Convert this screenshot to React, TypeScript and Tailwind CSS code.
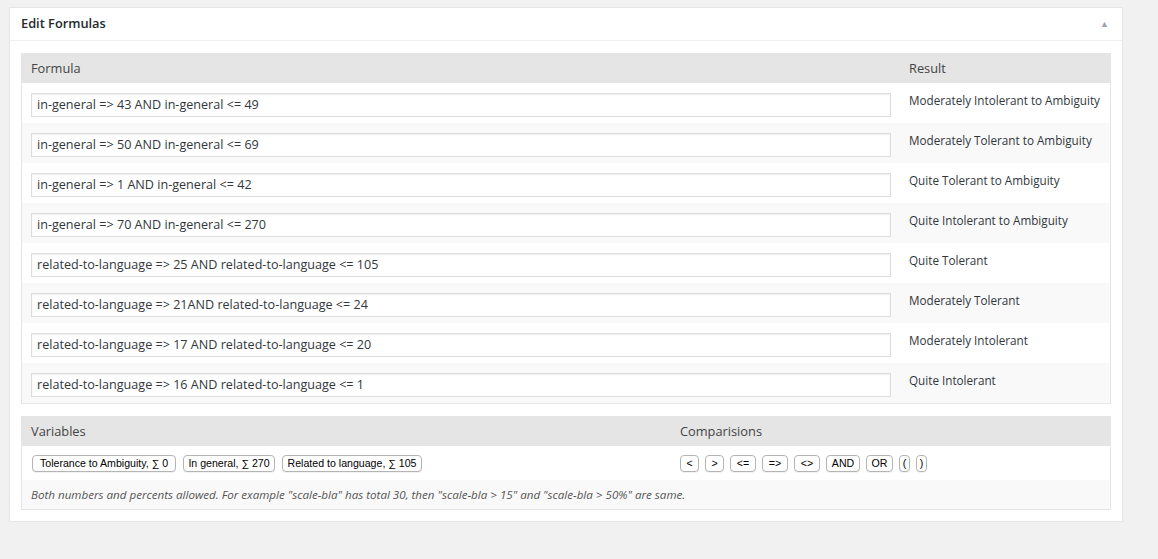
import React from "react";

const rows: [string, string][] = [
  ["in-general => 43 AND in-general <= 49", "Moderately Intolerant to Ambiguity"],
  ["in-general => 50 AND in-general <= 69", "Moderately Tolerant to Ambiguity"],
  ["in-general => 1 AND in-general <= 42", "Quite Tolerant to Ambiguity"],
  ["in-general => 70 AND in-general <= 270", "Quite Intolerant to Ambiguity"],
  ["related-to-language => 25 AND related-to-language <= 105", "Quite Tolerant"],
  ["related-to-language => 21AND related-to-language <= 24", "Moderately Tolerant"],
  ["related-to-language => 17 AND related-to-language <= 20", "Moderately Intolerant"],
  ["related-to-language => 16 AND related-to-language <= 1", "Quite Intolerant"],
];

const variables: [string, string][] = [
  ["Tolerance to Ambiguity, ∑ 0", "w-[144px]"],
  ["In general, ∑ 270", "w-[92px]"],
  ["Related to language, ∑ 105", "w-[140px]"],
];

const comparisons: [string, string][] = [
  ["<", "w-[19px]"],
  [">", "w-[19px]"],
  ["<=", "w-[26px]"],
  ["=>", "w-[26px]"],
  ["<>", "w-[26px]"],
  ["AND", "w-[34px]"],
  ["OR", "w-[27px]"],
  ["(", "w-[11px]"],
  [")", "w-[11px]"],
];

function SmallButton({ label, width }: { label: string; width: string }) {
  return (
    <button
      className={`${width} h-[17px] shrink-0 whitespace-nowrap px-0 rounded-[4px] border border-[#b4b4b4] bg-white text-[10.6px] leading-[15px] text-black font-['Liberation_Sans',Arial,sans-serif] shadow-[0_1px_0_rgba(0,0,0,0.05)]`}
    >
      {label}
    </button>
  );
}

export default function App() {
  return (
    <div className="min-h-[559px] w-full bg-[#f1f1f1] pl-[9px] pt-[7px] font-['Open_Sans',sans-serif] text-[#32373c]">
      <div className="w-[1114px] bg-white border border-[#e5e5e5]">
        {/* Header */}
        <div className="flex h-[33px] items-center justify-between border-b border-[#eeeeee] pl-[11px] pr-[13px]">
          <h2 className="text-[12.8px] font-semibold text-[#23282d]">Edit Formulas</h2>
          <span className="text-[9px] text-[#a0a5aa]">▲</span>
        </div>

        <div className="px-[11px] pt-[12px] pb-[11px]">
          {/* Formulas table */}
          <div className="w-[1090px] border border-[#e5e5e5]">
            <div className="flex h-[29px] items-center bg-[#e5e5e5] text-[12.8px] text-[#444]">
              <div className="w-[877px] pl-[9px]">Formula</div>
              <div className="flex-1 pl-[10px]">Result</div>
            </div>
            {rows.map(([formula, result], i) => (
              <div key={i} className={`flex h-[40px] ${i % 2 === 1 ? "bg-[#f9f9f9]" : "bg-white"}`}>
                <div className="w-[877px] pl-[9px] pt-[8px]">
                  <input
                    readOnly
                    value={formula}
                    className="h-[24px] w-[860px] border border-[#dddddd] bg-white px-[5px] text-[12.6px] text-[#32373c] shadow-[inset_0_1px_2px_rgba(0,0,0,0.07)] outline-none font-['Open_Sans',sans-serif]"
                  />
                </div>
                <div className="flex-1 pl-[10px] pt-[8px] text-[11.7px] leading-[18px] text-[#32373c]">{result}</div>
              </div>
            ))}
          </div>

          {/* Variables table */}
          <div className="mt-[12px] w-[1090px] border border-[#e5e5e5]">
            <div className="flex h-[29px] items-center bg-[#e5e5e5] text-[12.8px] text-[#444]">
              <div className="w-[648px] pl-[9px]">Variables</div>
              <div className="flex-1 pl-[10px]">Comparisions</div>
            </div>
            <div className="flex h-[34px] items-center bg-white">
              <div className="flex w-[648px] gap-[7px] pl-[10px]">
                {variables.map(([v, w]) => (
                  <SmallButton key={v} label={v} width={w} />
                ))}
              </div>
              <div className="flex flex-1 gap-[6px] pl-[10px]">
                {comparisons.map(([c, w]) => (
                  <SmallButton key={c} label={c} width={w} />
                ))}
              </div>
            </div>
            <div className="flex h-[29px] items-center bg-[#f9f9f9] pl-[9px] text-[11.6px] italic text-[#555]">
              Both numbers and percents allowed. For example "scale-bla" has total 30, then "scale-bla &gt; 15" and "scale-bla &gt; 50%" are same.
            </div>
          </div>
        </div>
      </div>
    </div>
  );
}
